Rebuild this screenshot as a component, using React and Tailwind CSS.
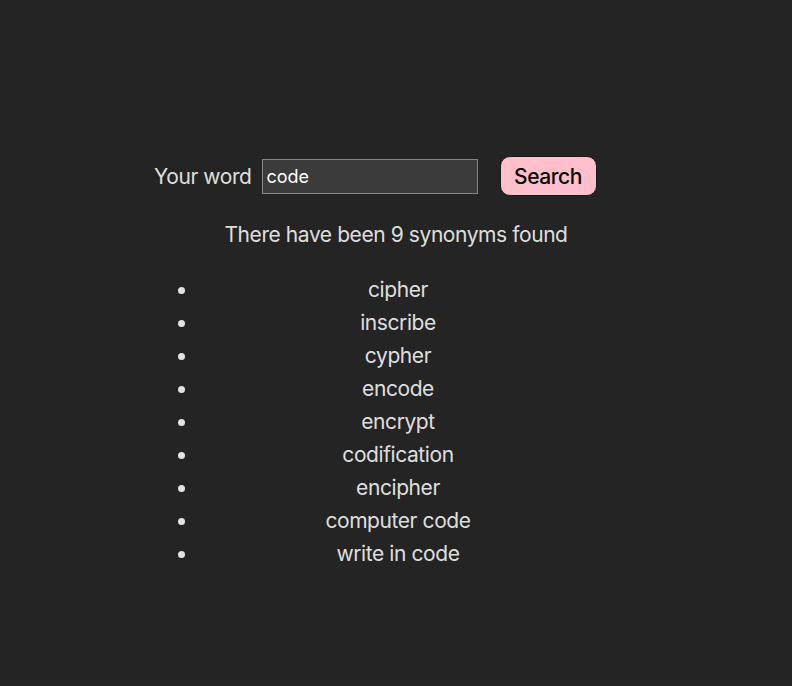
import React from "react";

const synonyms = [
  "cipher",
  "inscribe",
  "cypher",
  "encode",
  "encrypt",
  "codification",
  "encipher",
  "computer code",
  "write in code",
];

export default function App() {
  return (
    <div className="min-h-screen w-full bg-[#242424] text-[rgba(255,255,255,0.87)] font-['Inter',sans-serif] text-[21px] tracking-[-0.02em] leading-[33px]">
      <div className="mx-auto w-[510px] pt-[156px]">
        <div className="flex items-center pl-[13px]">
          <label>Your word</label>
          <input
            defaultValue="code"
            className="ml-[10px] w-[216px] h-[35px] px-[4px] bg-[#3b3b3b] border border-[#858585] text-white text-[18px] tracking-normal font-['Inter',sans-serif] outline-none"
          />
          <button className="ml-[22px] w-[97px] h-[40px] rounded-[10px] bg-[#ffc0cb] border border-[#1a1a1a] text-black text-[21px] font-medium">
            Search
          </button>
        </div>
        <p className="mt-[22px] text-center">There have been 9 synonyms found</p>
        <ul className="mt-[22px] ml-[2px] w-[455px] pl-[55px] list-disc">
          {synonyms.map((s) => (
            <li key={s} className="text-center">
              {s}
            </li>
          ))}
        </ul>
      </div>
    </div>
  );
}
